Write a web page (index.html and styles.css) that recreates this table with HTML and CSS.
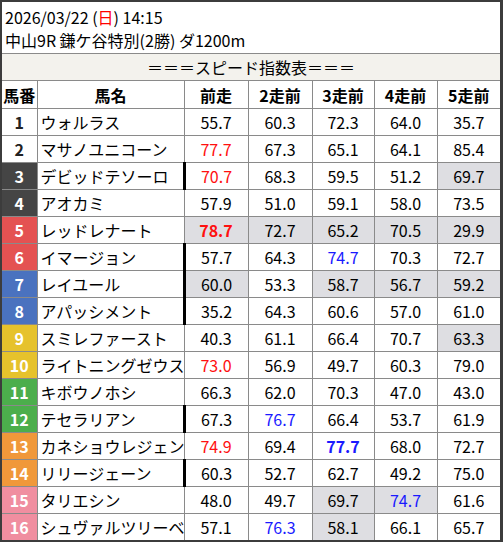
FILE: index.html
```html
<!DOCTYPE html>
<html lang="ja">
<head>
<meta charset="utf-8">
<link rel="stylesheet" href="styles.css">
</head>
<body>
<div class="frame">
  <div class="info">
    <div class="line">2026/03/22 (<span class="sun">日</span>) 14:15</div>
    <div class="line">中山9R 鎌ケ谷特別(2勝) ダ1200m</div>
  </div>
  <div class="title">＝＝＝スピード指数表＝＝＝</div>
  <table class="speed">
    <colgroup>
      <col class="c-no"><col class="c-name"><col class="c-v1"><col class="c-v2"><col class="c-v3"><col class="c-v4"><col class="c-v5">
    </colgroup>
    <thead>
      <tr><th>馬番</th><th>馬名</th><th>前走</th><th>2走前</th><th>3走前</th><th>4走前</th><th>5走前</th></tr>
    </thead>
    <tbody>
      <tr><td class="no w1">1</td><td class="name">ウォルラス</td><td>55.7</td><td>60.3</td><td>72.3</td><td>64.0</td><td>35.7</td></tr>
      <tr><td class="no w2">2</td><td class="name">マサノユニコーン</td><td class="red">77.7</td><td>67.3</td><td>65.1</td><td>64.1</td><td>85.4</td></tr>
      <tr><td class="no w3">3</td><td class="name">デビッドテソーロ</td><td class="rest red">70.7</td><td>68.3</td><td>59.5</td><td>51.2</td><td class="hl">69.7</td></tr>
      <tr><td class="no w4">4</td><td class="name">アオカミ</td><td>57.9</td><td>51.0</td><td>59.1</td><td>58.0</td><td>73.5</td></tr>
      <tr><td class="no w5">5</td><td class="name">レッドレナート</td><td class="hl red bold">78.7</td><td class="hl">72.7</td><td class="hl">65.2</td><td class="hl">70.5</td><td class="hl">29.9</td></tr>
      <tr><td class="no w6">6</td><td class="name">イマージョン</td><td class="rest">57.7</td><td>64.3</td><td class="blue">74.7</td><td>70.3</td><td>72.7</td></tr>
      <tr><td class="no w7">7</td><td class="name">レイユール</td><td class="rest hl">60.0</td><td>53.3</td><td class="hl">58.7</td><td class="hl">56.7</td><td class="hl">59.2</td></tr>
      <tr><td class="no w8">8</td><td class="name">アパッシメント</td><td class="rest">35.2</td><td>64.3</td><td>60.6</td><td>57.0</td><td>61.0</td></tr>
      <tr><td class="no w9">9</td><td class="name">スミレファースト</td><td>40.3</td><td>61.1</td><td>66.4</td><td>70.7</td><td class="hl">63.3</td></tr>
      <tr><td class="no w10">10</td><td class="name">ライトニングゼウス</td><td class="red">73.0</td><td>56.9</td><td>49.7</td><td>60.3</td><td>79.0</td></tr>
      <tr><td class="no w11">11</td><td class="name">キボウノホシ</td><td>66.3</td><td>62.0</td><td>70.3</td><td>47.0</td><td>43.0</td></tr>
      <tr><td class="no w12">12</td><td class="name">テセラリアン</td><td class="rest">67.3</td><td class="blue">76.7</td><td>66.4</td><td>53.7</td><td>61.9</td></tr>
      <tr><td class="no w13">13</td><td class="name">カネショウレジェン</td><td class="red">74.9</td><td>69.4</td><td class="blue bold">77.7</td><td>68.0</td><td>72.7</td></tr>
      <tr><td class="no w14">14</td><td class="name">リリージェーン</td><td class="rest">60.3</td><td>52.7</td><td>62.7</td><td>49.2</td><td>75.0</td></tr>
      <tr><td class="no w15">15</td><td class="name">タリエシン</td><td>48.0</td><td>49.7</td><td class="hl">69.7</td><td class="hl blue">74.7</td><td>61.6</td></tr>
      <tr><td class="no w16">16</td><td class="name">シュヴァルツリーベ</td><td>57.1</td><td class="blue">76.3</td><td class="hl">58.1</td><td>66.1</td><td>65.7</td></tr>
    </tbody>
  </table>
</div>
</body>
</html>
```

FILE: styles.css
```css
html, body {
  margin: 0;
  padding: 0;
  background: #ffffff;
}
body {
  font-family: "Noto Sans CJK JP", "Noto Sans", sans-serif;
  font-size: 16px;
  color: #000;
}
.frame {
  box-sizing: border-box;
  width: 503px;
  height: 542px;
  border: 2px solid #3c3c3c;
  border-right-width: 3px;
  overflow: hidden;
}
.info {
  height: 51px;
  padding: 4px 0 0 3px;
  box-sizing: border-box;
}
.line {
  height: 23px;
  line-height: 23px;
  white-space: nowrap;
}
.sun {
  color: #ff0000;
}
.title {
  height: 26px;
  line-height: 26px;
  border-top: 1px solid #8a8a8a;
  background: #f3f2ed;
  text-align: center;
  white-space: nowrap;
}
.speed {
  width: 498px;
  border-collapse: collapse;
  table-layout: fixed;
}
.c-no { width: 35px; }
.c-name { width: 147px; }
.c-v1 { width: 64px; }
.c-v2 { width: 64px; }
.c-v3 { width: 62px; }
.c-v4 { width: 63px; }
.c-v5 { width: 63px; }
.speed th, .speed td {
  border: 1px solid #8a8a8a;
  padding: 0;
  text-align: center;
  white-space: nowrap;
  overflow: hidden;
}
.speed th {
  height: 27px;
  font-weight: bold;
  background: #ffffff;
}
.speed td {
  height: 26px;
  line-height: 26px;
}
.speed tr > :first-child { border-left: none; }
.speed tr > :last-child { border-right: none; }
.speed tbody tr:last-child td { border-bottom: none; }
.speed td.name {
  text-align: left;
  padding-left: 3px;
}
.speed td.rest {
  border-left: 3px solid #000;
}
.no {
  font-weight: bold;
  color: #fff;
}
.w1, .w2 { background: #fff; color: #222; }
.w3, .w4 { background: #454545; }
.w5, .w6 { background: #e45252; }
.w7, .w8 { background: #4a72bf; }
.w9, .w10 { background: #e6c22c; }
.w11, .w12 { background: #4cae4c; }
.w13, .w14 { background: #f0983a; }
.w15, .w16 { background: #f08ea0; }
.hl { background: #dedee2; }
.red { color: #ff1010; }
.blue { color: #1a1aff; }
.bold { font-weight: bold; }
```
